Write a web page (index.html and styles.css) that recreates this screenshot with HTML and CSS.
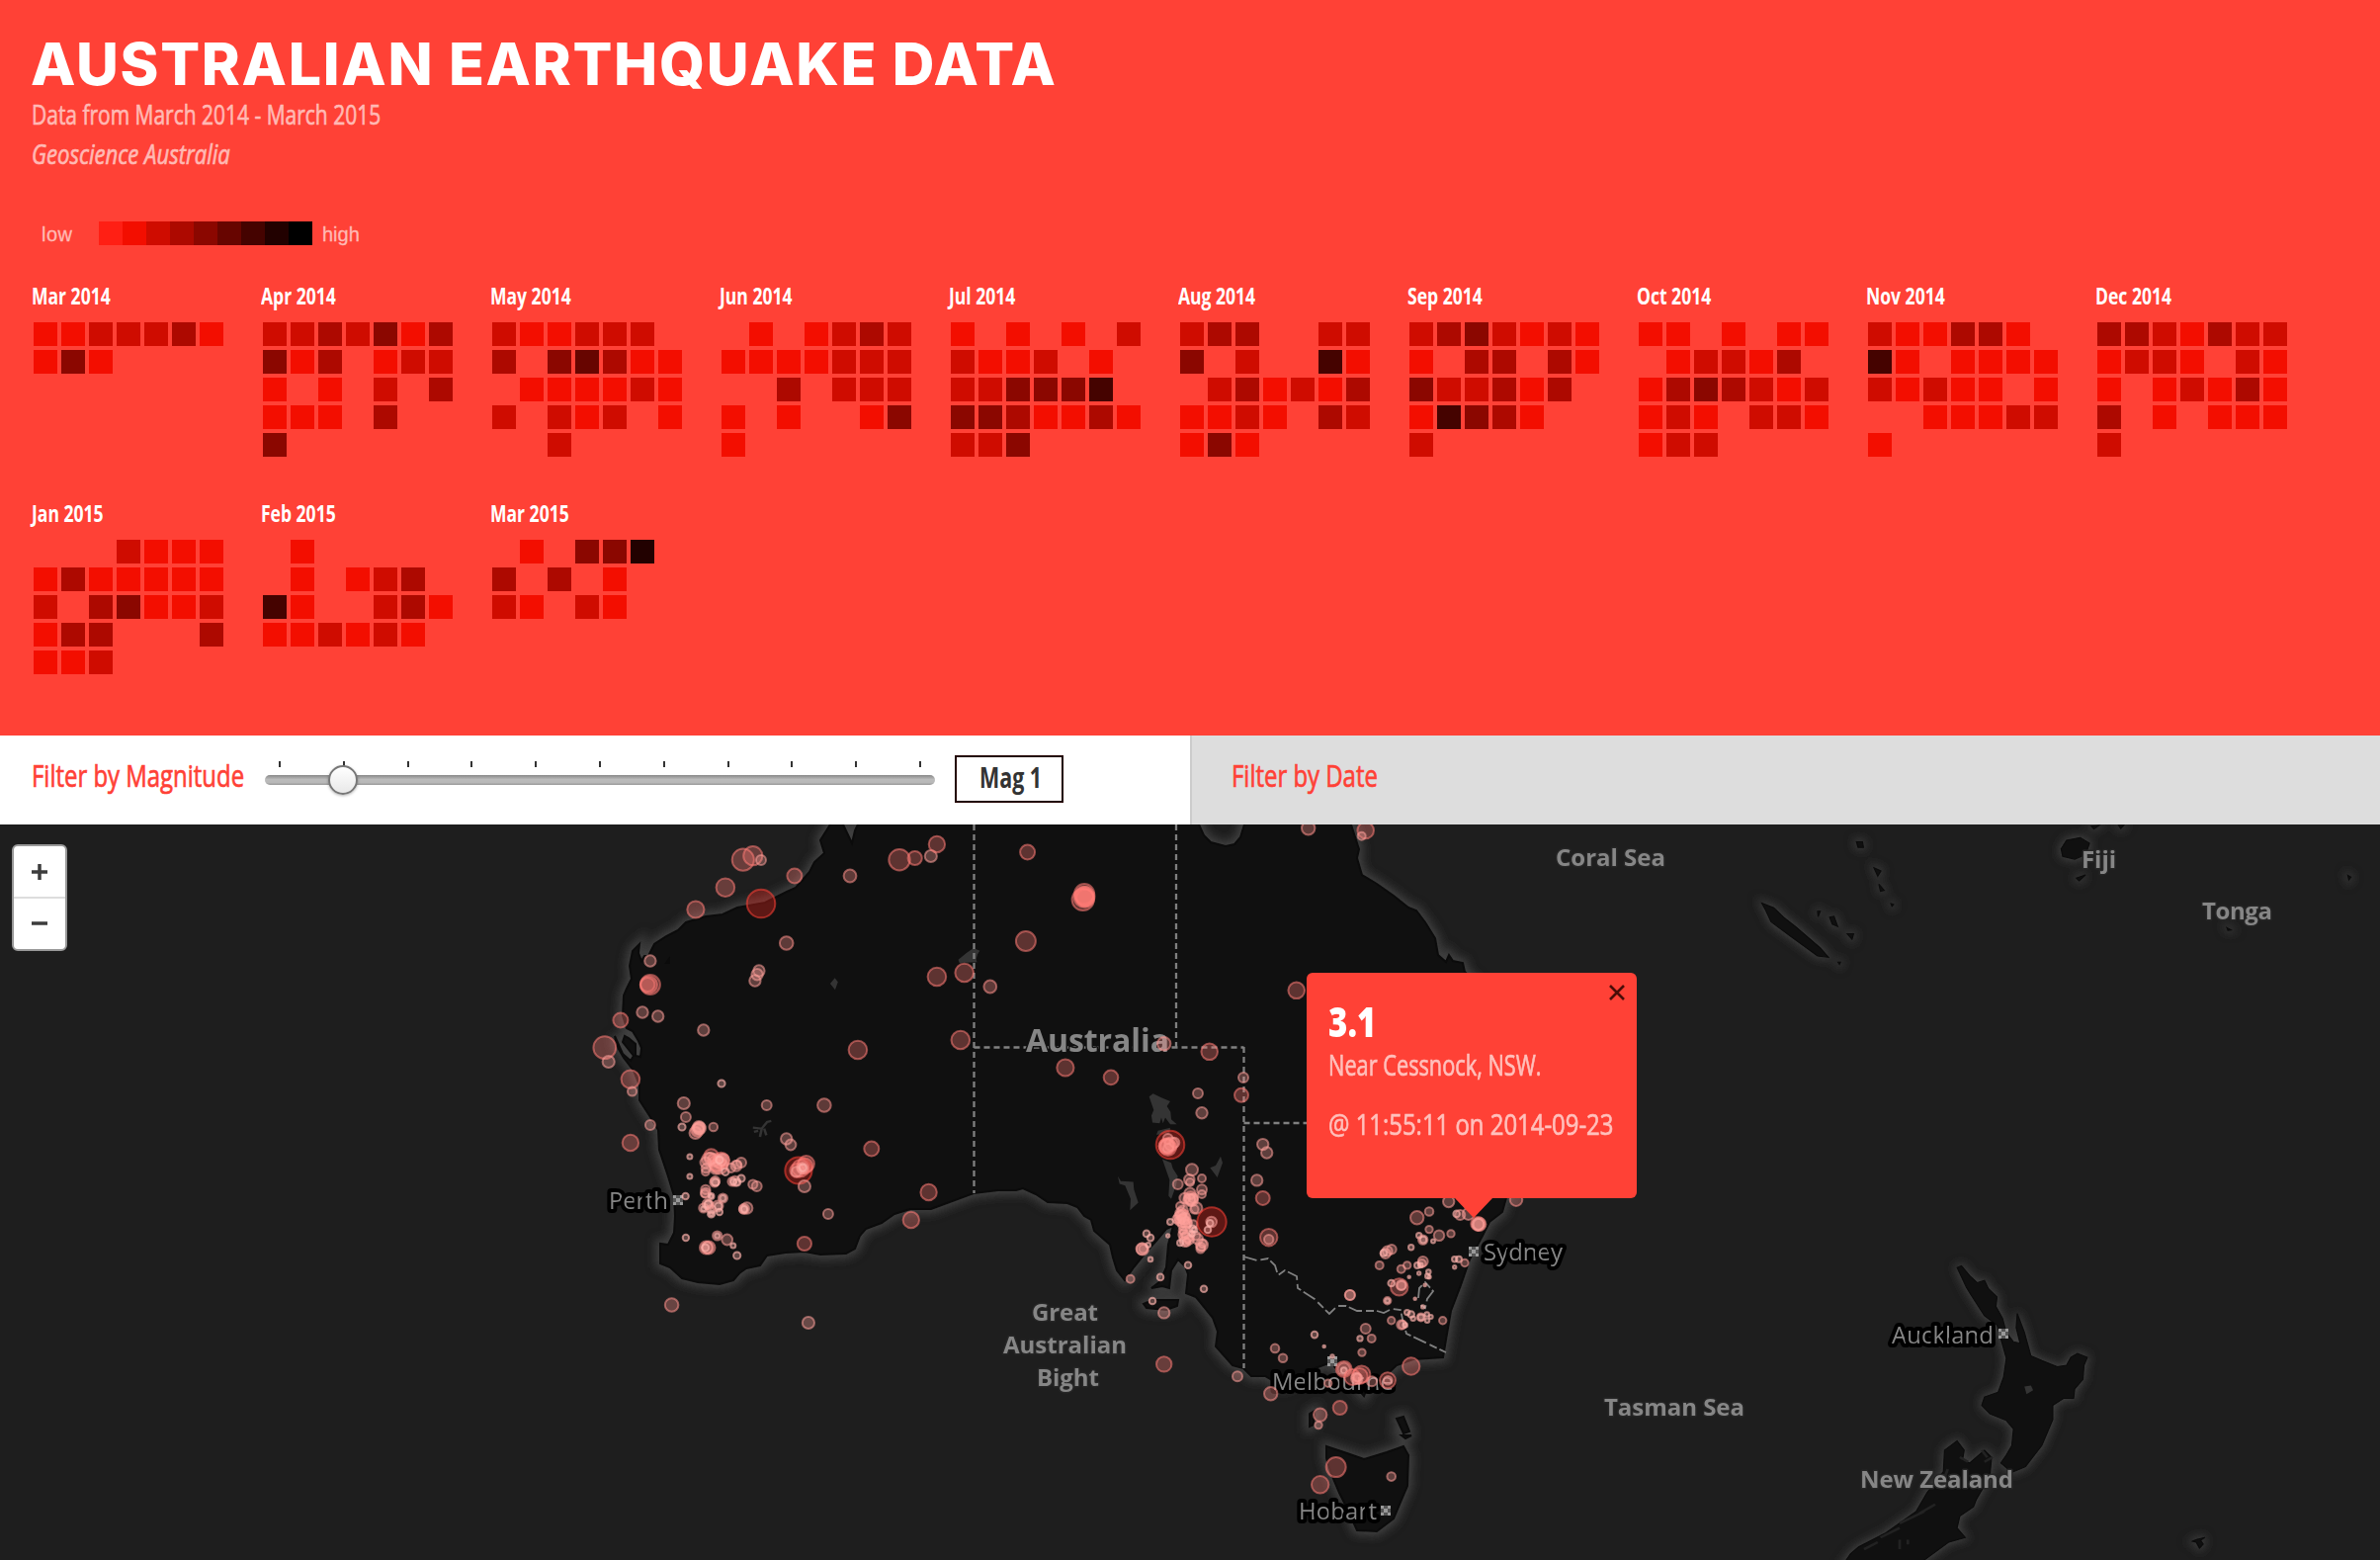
FILE: index.html
```html
<!DOCTYPE html>
<html lang="en">
<head>
<meta charset="utf-8">
<title>Australian Earthquake Data</title>
<link rel="stylesheet" href="styles.css">
</head>
<body>
<header class="hero">
  <h1 class="title">Australian Earthquake Data</h1>
  <p class="sub"><span class="narrow sub-range">Data from March 2014 - March 2015</span></p>
  <p class="sub"><em class="narrow sub-source">Geoscience Australia</em></p>
  <div class="legend">
    <span class="legend-low">low</span>
    <div class="ramp"><i class="c0"></i><i class="c1"></i><i class="c2"></i><i class="c3"></i><i class="c4"></i><i class="c5"></i><i class="c6"></i><i class="c7"></i><i class="c8"></i></div>
    <span>high</span>
  </div>
  <div class="months" id="months"></div>
</header>
<section class="filters">
  <div class="filter filter-mag">
    <span class="filter-label label-mag"><span class="narrow">Filter by Magnitude</span></span>
    <div class="slider">
      <div class="ticks"><i></i><i></i><i></i><i></i><i></i><i></i><i></i><i></i><i></i><i></i><i></i></div>
      <div class="track"></div>
      <div class="thumb"></div>
    </div>
    <div class="mag-box"><span class="narrow">Mag 1</span></div>
  </div>
  <div class="filter filter-date">
    <span class="filter-label"><span class="narrow">Filter by Date</span></span>
  </div>
</section>
<main class="map">
  <svg class="map-canvas" viewBox="0 834 2408 744" width="2408" height="744">
    <defs>
      <filter id="soft" x="-5%" y="-5%" width="110%" height="110%"><feGaussianBlur stdDeviation="5"/></filter>
      <g id="land">
        <path d="M840 820L840 834 830 850 834 863 824 872 819 882 812 890 805 898 796 902 774 913 746 918 731 925 714 927 694 933 686 941 674 947 662 955 659 961 656 967 652 967 649 972 646 964 647 955 640 962 637 977 639 990 634 1000 631 1007 630 1027 634 1040 640 1043 646 1053 649 1060 648 1069 643 1068 643 1056 636 1050 632 1048 630 1054 641 1068 638 1073 630 1066 622 1048 624 1058 631 1070 641 1083 647 1098 647 1113 658 1130 666 1143 667 1163 676 1190 682 1210 683 1230 682 1247 676 1259 668 1258 668 1278 678 1282 690 1293 706 1297 728 1299 742 1295 748 1288 755 1283 769 1280 776 1270 795 1267 814 1266 830 1269 856 1268 865 1263 870 1250 876 1243 892 1237 905 1228 921 1223 942 1223 985 1207 1010 1204 1028 1204 1035 1202 1048 1208 1060 1216 1080 1217 1090 1221 1097 1230 1104 1234 1107 1245 1123 1259 1126 1272 1130 1285 1138 1295 1147 1282 1160 1266 1170 1255 1180 1243 1187 1240 1182 1259 1180 1282 1174 1296 1165 1303 1176 1301 1183 1303 1185 1285 1192 1274 1199 1281 1202 1289 1200 1308 1210 1312 1227 1333 1232 1347 1230 1362 1247 1381 1258 1384 1266 1392 1280 1392 1297 1402 1310 1398 1325 1386 1336 1382 1347 1378 1354 1388 1362 1388 1366 1396 1380 1412 1384 1402 1393 1400 1413 1381 1430 1375 1460 1373 1463 1355 1468 1326 1478 1300 1487 1274 1500 1250 1507 1236 1520 1226 1530 1190 1525 1100 1500 1000 1482 983 1480 974 1470 972 1466 966 1463 973 1455 966 1452 949 1442 933 1433 921 1425 918 1410 906 1393 894 1378 885 1373 868 1375 859 1367 834 1367 820 1259 820 1259 834 1255 847 1249 854 1240 856 1225 852 1218 845 1213 834 1213 820 870 820 868 834 865 840 862 853 853 834 852 820Z"/>
        <path d="M1157 1319L1166 1315 1192 1315 1191 1321 1180 1325 1160 1323ZM1325 1430L1330 1427 1329 1441 1325 1443ZM1413 1435L1420 1433 1426 1448 1420 1450ZM1418 1452L1428 1452 1422 1455ZM674 974L677 970 677 974Z"/>
        <path d="M1342 1463L1363 1470 1380 1476 1403 1469 1420 1463 1425 1472 1424 1503 1418 1517 1410 1536 1393 1549 1373 1548 1363 1526 1355 1510 1347 1491 1342 1475Z"/>
        <g transform="translate(1540 830) scale(.5536 .4771)">
          <path d="M795 948L803 944 818 965 832 980 845 975 852 992 868 1010 866 1030 878 1055 885 1085 898 1105 910 1108 903 1075 905 1045 918 1085 930 1135 950 1145 978 1158 995 1155 1003 1138 1015 1130 1033 1138 1027 1155 1025 1185 1010 1205 1008 1225 990 1225 970 1240 970 1270 950 1325 920 1370 895 1382 875 1362 885 1345 895 1325 898 1290 885 1272 855 1258 840 1240 845 1222 870 1212 880 1180 885 1140 868 1070 845 1050 820 1005 812 990Z"/>
          <path d="M585 1580L600 1555 615 1540 665 1510 720 1465 740 1425 770 1380 772 1335 795 1315 808 1335 805 1355 818 1362 845 1335 858 1350 855 1390 830 1440 825 1455 800 1475 795 1500 810 1520 780 1530 735 1568 730 1580Z"/>
          <path d="M438 175L460 185 478 205 500 225 545 270 560 290 540 287 490 245 455 215 445 190ZM562 205L570 203 577 225 567 220ZM594 240L606 240 603 252ZM643 100L656 107 650 118ZM652 135L662 148 655 150ZM611 45L622 45 624 57 614 57ZM674 176L679 178 676 182ZM985 60L995 42 1020 36 1037 48 1030 72 1010 82 988 76ZM1013 122L1030 115 1018 128ZM1040 12L1055 10 1045 18ZM1090 10L1100 10 1094 17ZM1509 116L1515 120 1511 126ZM1288 227L1296 232 1290 233ZM1225 1528L1233 1524 1248 1520 1240 1526 1245 1534 1238 1543 1232 1530ZM577 300L582 300 580 305ZM540 192L545 192 541 204Z"/>
        </g>
      </g>
      <g id="marker"><rect x="-5" y="-5" width="10" height="10" fill="#555"/><path d="M-5-5h3v3h-3zM2-5h3v3h-3zM-5 2h3v3h-3zM2 2h3v3h-3zM-2-2h4v4h-4z" fill="#999"/></g>
    </defs>
    <use href="#land" class="halo" filter="url(#soft)"/>
    <use href="#land" class="land"/>
    <g class="lake" transform="translate(980 830) scale(.3333 .3827)">
      <path d="M548 730L560 722 585 732 612 742 602 755 613 770 615 790 632 803 612 803 597 785 590 800 585 785 580 800 558 798 555 780 562 765ZM575 820L612 812 610 828 570 830ZM588 895L615 905 620 920 635 940 630 965 615 1000 607 992 610 950ZM453 940L462 953 500 955 502 975 515 1010 490 1030 492 1000 475 965 458 960ZM733 918L750 912 765 888 771 905 755 943ZM0 350L30 345 20 375 0 370Z"/>
    </g>
    <g class="lake" transform="translate(560 830) scale(.3571 .3333)">
      <path d="M784 495L797 478 806 490 798 514ZM1147 422L1170 402 1190 387 1208 395 1195 415 1200 430 1150 432Z"/>
      <path class="salt" d="M565 932L590 935 585 960M590 935L605 915 617 912M597 935L603 955M568 945L580 942"/>
    </g>
    <g class="lake" transform="translate(1540 830) scale(.5536 .4771)"><path d="M918 1200L930 1198 934 1208 922 1216Z"/><path class="ridge" d="M625 1545L650 1530M655 1520L690 1500M690 1525V1545M705 1525V1535M725 1470L755 1450M770 1400L778 1375M690 1490L735 1465M800 1350L815 1360M840 1335L850 1350M845 1360L860 1350"/></g>
    <g class="border">
      <path d="M985.5 834V1207M1190 834V1059M985.5 1059.500H1258.500M1258.500 1059V1384M1258.500 1136H1330"/>
      <path class="river" d="M1258 1271L1272 1275 1283 1273 1290 1280 1293 1290 1300 1285 1312 1291 1313 1303 1330 1314 1345 1329 1353 1321 1362 1321 1373 1326 1393 1326 1400 1328 1408 1324 1417 1325 1420 1339 1423 1349 1463 1368"/>
      <path class="river" d="M1435 1313L1436 1303 1442 1297 1450 1306 1444 1314 1442 1323 1437 1320"/>
    </g>
    <g class="region">
      <text x="1038" y="1064" textLength="145" class="country">Australia</text>
      <text x="1044" y="1336" textLength="67">Great</text>
      <text x="1015" y="1369" textLength="125">Australian</text>
      <text x="1049" y="1402" textLength="63">Bight</text>
      <text x="1574" y="876" textLength="111">Coral Sea</text>
      <text x="2106" y="878" textLength="35">Fiji</text>
      <text x="2228" y="930" textLength="71">Tonga</text>
      <text x="1623" y="1432" textLength="142">Tasman Sea</text>
      <text x="1882" y="1505" textLength="155">New Zealand</text>
    </g>
    <g class="city">
      <text x="616" y="1223" textLength="60">Perth</text>
      <text x="1501" y="1275" textLength="80">Sydney</text>
      <text x="1287" y="1406" textLength="123">Melbourne</text>
      <text x="1314" y="1537" textLength="79">Hobart</text>
      <text x="1914" y="1359" textLength="103">Auckland</text>
    </g>
    <use href="#marker" x="686" y="1214"/><use href="#marker" x="1491" y="1266"/><use href="#marker" x="1348" y="1377"/><use href="#marker" x="1402" y="1528"/><use href="#marker" x="2027" y="1349"/>
    <g id="quakes"></g>
  </svg>
  <div class="zoom">
    <span class="zoom-btn"><svg width="18" height="18" viewBox="0 0 18 18"><path d="M9 1V17M1 9H17"/></svg></span>
    <span class="zoom-btn"><svg width="18" height="18" viewBox="0 0 18 18"><path d="M1 9H17"/></svg></span>
  </div>
  <div class="popup">
    <svg class="close" width="18" height="16" viewBox="0 0 18 16"><path d="M2 1L16 15M16 1L2 15"/></svg>
    <strong class="popup-mag"><span class="narrow">3.1</span></strong>
    <p class="popup-place"><span class="narrow">Near Cessnock, NSW.</span></p>
    <p class="popup-time"><span class="narrow">@ 11:55:11 on 2014-09-23</span></p>
  </div>
</main>
<script src="app.js"></script>
</body>
</html>
```
FILE: styles.css
```css
* { box-sizing: border-box; }
body { margin: 0; width: 2408px; height: 1578px; overflow: hidden; background: #1e1e1e; font-family: "Open Sans", "Noto Sans", sans-serif; }
p, h1 { margin: 0; }
.narrow { display: inline-block; white-space: nowrap; transform: scaleX(.75); transform-origin: 0 50%; }

.hero { height: 744px; padding: 29px 32px 0; background: #ff4136; color: #fff; }
.title { height: 67px; margin-left: -1px; font: 800 59px/72px Inter, sans-serif; letter-spacing: 1.7px; text-transform: uppercase; white-space: nowrap; }
.sub { height: 40px; font-size: 27px; line-height: 40px; color: #ffb9b4; -webkit-text-stroke: .7px #ffb9b4; }
.sub-range { transform: scaleX(.777); }
.sub-source { transform: scaleX(.818); }
.legend { display: flex; align-items: center; height: 24px; margin-top: 48px; padding-left: 10px; font: 20px/24px "Liberation Sans", sans-serif; color: #ffb9b4; -webkit-text-stroke: .3px #ffb9b4; }
.legend > span { position: relative; top: 1px; }
.legend-low { width: 58px; letter-spacing: .5px; }
.ramp { display: flex; margin-right: 10px; }
.ramp i { width: 24px; height: 24px; }
.months { display: grid; grid-template-columns: repeat(10, 232px); grid-auto-rows: 220px; margin-top: 34px; }
.month-name { display: block; height: 44px; font-size: 24px; font-weight: 700; line-height: 34px; }
.month-name .narrow { transform: scaleX(.73); }
.days { display: grid; grid-template-columns: repeat(7, 24px); grid-auto-rows: 24px; gap: 4px; padding-left: 2px; }
.c0 { background: #ff1f14; }
.c1 { background: #f30e00; }
.c2 { background: #cf0c00; }
.c3 { background: #ad0900; }
.c4 { background: #8b0700; }
.c5 { background: #670500; }
.c6 { background: #450300; }
.c7 { background: #220100; }
.c8 { background: #000; }

.filters { display: flex; height: 90px; }
.filter { display: flex; flex: 0 0 1204px; align-items: flex-start; padding-left: 32px; background: #fff; }
.filter-date { padding-left: 40px; border-left: 2px solid #ccc; background: #ddd; }
.filter-label { font-size: 31px; line-height: 80px; color: #ff4136; -webkit-text-stroke: .7px #ff4136; }
.filter-label .narrow { transform: scaleX(.772); }
.label-mag { width: 236px; }
.slider { position: relative; width: 678px; height: 90px; padding-top: 26px; }
.ticks { display: flex; justify-content: space-between; padding: 0 14px; }
.ticks i { width: 2px; height: 6px; background: #333; }
.track { height: 10px; margin-top: 8px; border-radius: 5px; background: linear-gradient(#888, #bbb 45%, #b8b8b8 75%, #999); }
.thumb { position: absolute; left: 64px; top: 30px; width: 30px; height: 30px; border: 2px solid #777; border-radius: 50%; background: linear-gradient(#fff, #e8e8e8); box-shadow: 0 1px 3px rgba(0,0,0,.3); }
.mag-box { width: 110px; height: 48px; margin: 20px 0 0 20px; padding-left: 23px; border: 2px solid #220100; font-size: 28px; font-weight: 700; line-height: 40px; color: #333; }
.mag-box .narrow { transform: scaleX(.765); }

.map { position: relative; height: 744px; background: #1e1e1e; }
.map-canvas { display: block; }
.halo { fill: #484848; stroke: #404040; stroke-width: 10; }
.land { fill: #101010; stroke: #0b0b0b; stroke-width: 2; }
.lake { fill: #343434; }
.salt { fill: none; stroke: #343434; stroke-width: 7; }
.ridge { fill: none; stroke: #222; stroke-width: 5; }
.border { fill: none; stroke: #808080; stroke-width: 2.300; stroke-dasharray: 6 4; }
.border .river { stroke-width: 1.800; stroke-dasharray: 14 4 8 3; }
.region { font-size: 24px; font-weight: 700; fill: #868686; stroke: #262626; stroke-width: 3; paint-order: stroke; stroke-linejoin: round; }
.region .country { font-size: 32px; stroke: #111; }
.city { font-size: 24px; fill: #868686; stroke: #000; stroke-width: 8; paint-order: stroke; stroke-linejoin: round; }
.quake { stroke-width: 2; fill-opacity: .33; stroke-opacity: .55; }
.q1 { fill: #ffb3ae; stroke: #ffb3ae; stroke-opacity: .65; }
.q2 { fill: #ffa09b; stroke: #ffa09b; }
.q3 { fill: #ff928d; stroke: #ff928d; }
.q4 { fill: #ff7c76; stroke: #ff7c76; }
.q5 { fill: #ff2a20; stroke: #ff4136; }

.zoom { position: absolute; left: 12px; top: 20px; width: 56px; height: 108px; border: 2px solid #999; border-radius: 6px; background: #fff; overflow: hidden; }
.zoom-btn { display: flex; align-items: center; justify-content: center; height: 53px; border-bottom: 2px solid #ddd; }
.zoom-btn:last-child { height: 50px; border-bottom: 0; }
.zoom-btn svg { fill: none; stroke: #3c3c3c; stroke-width: 3.500; }
.popup { position: absolute; left: 1322px; top: 150px; width: 334px; height: 228px; padding: 19px 22px; border-radius: 6px; background: #ff4136; color: #ffc0bc; }
.popup::after { content: ""; position: absolute; left: 150px; top: 100%; border: 19px solid transparent; border-top: 20px solid #ff4136; border-bottom: 0; }
.popup-mag { display: block; height: 54px; font-size: 42px; font-weight: 800; line-height: 60px; color: #fff; }
.popup-mag .narrow { transform: scaleX(.79); }
.popup p { height: 60px; font-size: 30px; line-height: 40px; -webkit-text-stroke: .7px #ffc0bc; }
.popup-place .narrow { transform: scaleX(.725); }
.popup-time .narrow { transform: scaleX(.797); }
.close { position: absolute; right: 11px; top: 12px; fill: none; stroke: #4a0d08; stroke-width: 2.600; }
```
FILE: app.js
```js
// One string per calendar row: the digit is the intensity step, a dot is a quiet day.
const months = [
  ["Mar 2014", "1122231", "141...."],
  ["Apr 2014", "2232413", "413.122", "1.1.2.3", "111.3..", "4......"],
  ["May 2014", "211222.", "3.45311", ".111121", "2.212.1", "..2...."],
  ["Jun 2014", ".1.1232", "1111222", "..3.222", "1.1..14", "1......"],
  ["Jul 2014", "1.1.1.2", "2112.1.", "224446.", "4431131", "224...."],
  ["Aug 2014", "233..22", "4.2..61", ".231213", "1121.32", "141...."],
  ["Sep 2014", "2342121", "1.33.31", "422313.", "16431..", "2......"],
  ["Oct 2014", "11.1.11", ".12213.", "1343212", "121.221", "122...."],
  ["Nov 2014", "211331.", "61.1111", "21211.1", "..11122", "1......"],
  ["Dec 2014", "3321322", "1221.21", "1.12131", "3.1.111", "2......"],
  ["Jan 2015", "...2111", "1311111", "2.34112", "133...3", "112...."],
  ["Feb 2015", ".1.....", ".1.123.", "61..231", "112121."],
  ["Mar 2015", ".1.447.", "3.3.1..", "21.21.."]
];
document.getElementById("months").innerHTML = months.map(([name, ...rows]) =>
  `<div><span class="month-name"><span class="narrow">${name}</span></span><div class="days">` +
  [...rows.join("")].map(c => c === "." ? "<i></i>" : `<i class="c${c}"></i>`).join("") +
  "</div></div>").join("");

// Survey sheets: origin x, origin y, x scale, y scale, then "x,y,radius" readings.
const sheets = [
  [560, 830, 2.8, 3, "537,119,31 565,107,27 588,120,14 683,168,21 487,203,26 403,270,24 588,252,40 660,372,19 582,456,16 577,467,16 571,486,16 274,426,16 274,498,28 270,498,24 267,498,20 252,582,16 296,594,16 190,606,21 145,689,32 156,732,17 218,785,26 223,822,13 274,924,14 218,978,23 425,636,16 840,168,18 980,119,30 1024,114,20 1069,108,17 1086,72,23 1343,96,21 1500,240,31 1504,222,28 1506,230,27 1502,234,27 1505,232,24 1503,228,26 1507,236,25 1338,366,28 1086,474,26 1164,462,26 1237,504,18 1153,666,26 862,696,26 1450,750,24 767,864,19 604,864,14 476,798,10 369,858,17 375,900,14 364,930,10 453,930,12 402,948,17 408,940,18 412,930,17 414,934,17 410,936,16 412,930,14 386,1020,7 386,1080,7 447,1018,20 440,1028,19 462,1040,22 475,1032,23 470,1048,23 455,1030,18 480,1030,18 470,1035,18 460,1048,18 476,1030,16 445,1026,17 431,1038,15 431,1066,11 460,1055,17 470,1030,10 432,1055,13 487,1066,10 503,1054,13 518,1048,15 532,1038,14 520,1044,12 458,1094,13 456,1098,13 459,1098,10 506,1096,12 514,1094,14 520,1098,10 532,1086,10 510,1096,8 565,1104,13 576,1110,14 431,1120,13 431,1130,14 429,1132,11 447,1140,8 447,1140,5 374,1140,9 480,1146,13 480,1146,8 425,1176,13 436,1164,14 440,1166,13 438,1164,10 447,1180,12 425,1178,7 465,1170,15 467,1170,10 470,1188,9 447,1194,10 447,1194,6 548,1176,16 540,1178,14 538,1180,12 540,1180,9 375,1266,9 464,1260,13 464,1260,7 492,1272,15 509,1290,7 520,1320,10 432,1296,18 440,1296,18 436,1296,16 430,1296,10 694,1062,38 716,1042,23 712,1048,22 700,1055,24 690,1062,20 705,1055,15 688,1066,14 706,1054,10 711,1110,17 660,966,16 672,984,15 901,996,21 1063,1128,23 1013,1212,23 778,1194,14 711,1284,20 335,1470,19 722,1524,17"],
  [980, 830, 3, 2.613, "432,679,22 593,590,20 731,611,25 834,679,15 828,726,21 696,721,15 708,773,17 995,449,25 1031,20,20 1205,26,25 1193,41,12 540,1092,10 552,1103,10 528,1133,18 526,1132,17 530,1132,13 545,1122,7 552,1160,7 491,1212,12 582,1207,10 666,1175,10 714,1238,10 558,1270,10 593,1301,17 593,1437,23 816,1469,15 917,1515,20 1127,1552,21 893,856,17 905,878,17 875,951,17 893,998,21 911,1102,26 911,1107,14 1158,1254,15 1205,1343,15 1223,1369,12 1188,1369,8 1194,1406,11 1050,1359,10 1079,1390,4 930,1395,13 954,1421,13 1104,1416,5"],
  [1100, 1120, 3, 3, "252,114,43 245,96,15 240,118,22 245,122,25 265,107,15 246,126,15 242,118,24 243,116,20 255,112,20 318,190,18 310,220,16 348,216,12 312,228,12 275,234,15 348,250,15 348,264,12 312,262,17 296,276,16 314,276,20 310,282,18 318,282,18 322,276,14 312,278,16 332,306,17 325,310,13 282,300,12 290,314,16 285,322,17 292,330,19 282,334,18 296,338,18 290,345,19 300,350,17 294,356,18 284,328,16 292,340,16 305,352,12 280,345,14 272,340,13 252,348,9 322,355,12 320,368,10 290,374,12 300,380,18 292,386,15 305,392,18 298,398,18 310,402,14 296,408,15 302,410,12 282,412,9 330,390,13 335,400,16 348,418,18 345,424,13 344,430,13 350,414,12 318,384,8 326,372,8 378,348,44 377,348,16 373,352,10 366,372,10 245,390,5"],
  [1260, 830, 3, 2.096, "521,842,20 558,829,13 617,808,17 822,804,19 641,834,10 652,836,15 677,834,18 706,855,21 710,856,20 706,856,18 708,856,16 558,867,11 527,880,8 539,889,14 540,889,10 588,880,16 624,876,11 570,892,6 503,905,8 444,909,14 431,913,15 425,918,15 420,917,10 407,943,12 473,951,12 491,943,11 539,935,15 536,939,12 522,943,9 532,943,7 527,960,5 556,957,7 553,966,7 558,968,5 497,968,4 467,989,26 473,985,15 474,986,13 443,981,10 545,985,4 515,1014,4 539,1031,5 431,1018,11 431,1018,7 317,1006,15 491,1043,8 503,1047,10 509,1056,7 533,1053,12 533,1053,9 551,1047,7 552,1060,7 563,1052,6 599,1060,11 443,1060,11 474,1069,14 477,1069,12 485,1070,7 635,930,8 648,930,9 666,938,11 635,947,5 503,1157,26 432,1187,24 433,1187,13 384,1189,15 299,1163,24 299,1163,19 299,1166,9 325,1180,24 353,1174,26 347,1178,24 338,1183,17 340,1181,12 251,1193,11 227,1260,20 222,1282,11 275,1371,30 227,1408,26 443,1391,13"]
];
document.getElementById("quakes").innerHTML = sheets.map(([ox, oy, sx, sy, readings]) =>
  readings.split(" ").map(s => {
    const [x, y, w] = s.split(",").map(Number);
    const r = w / sx;
    const tier = r < 3.6 ? 1 : r < 6.2 ? 2 : r < 7 ? 3 : r < 12 ? 4 : 5;
    return `<circle class="quake q${tier}" cx="${(ox + x / sx).toFixed(1)}" cy="${(oy + y / sy).toFixed(1)}" r="${r.toFixed(1)}"/>`;
  }).join("")).join("");
```
